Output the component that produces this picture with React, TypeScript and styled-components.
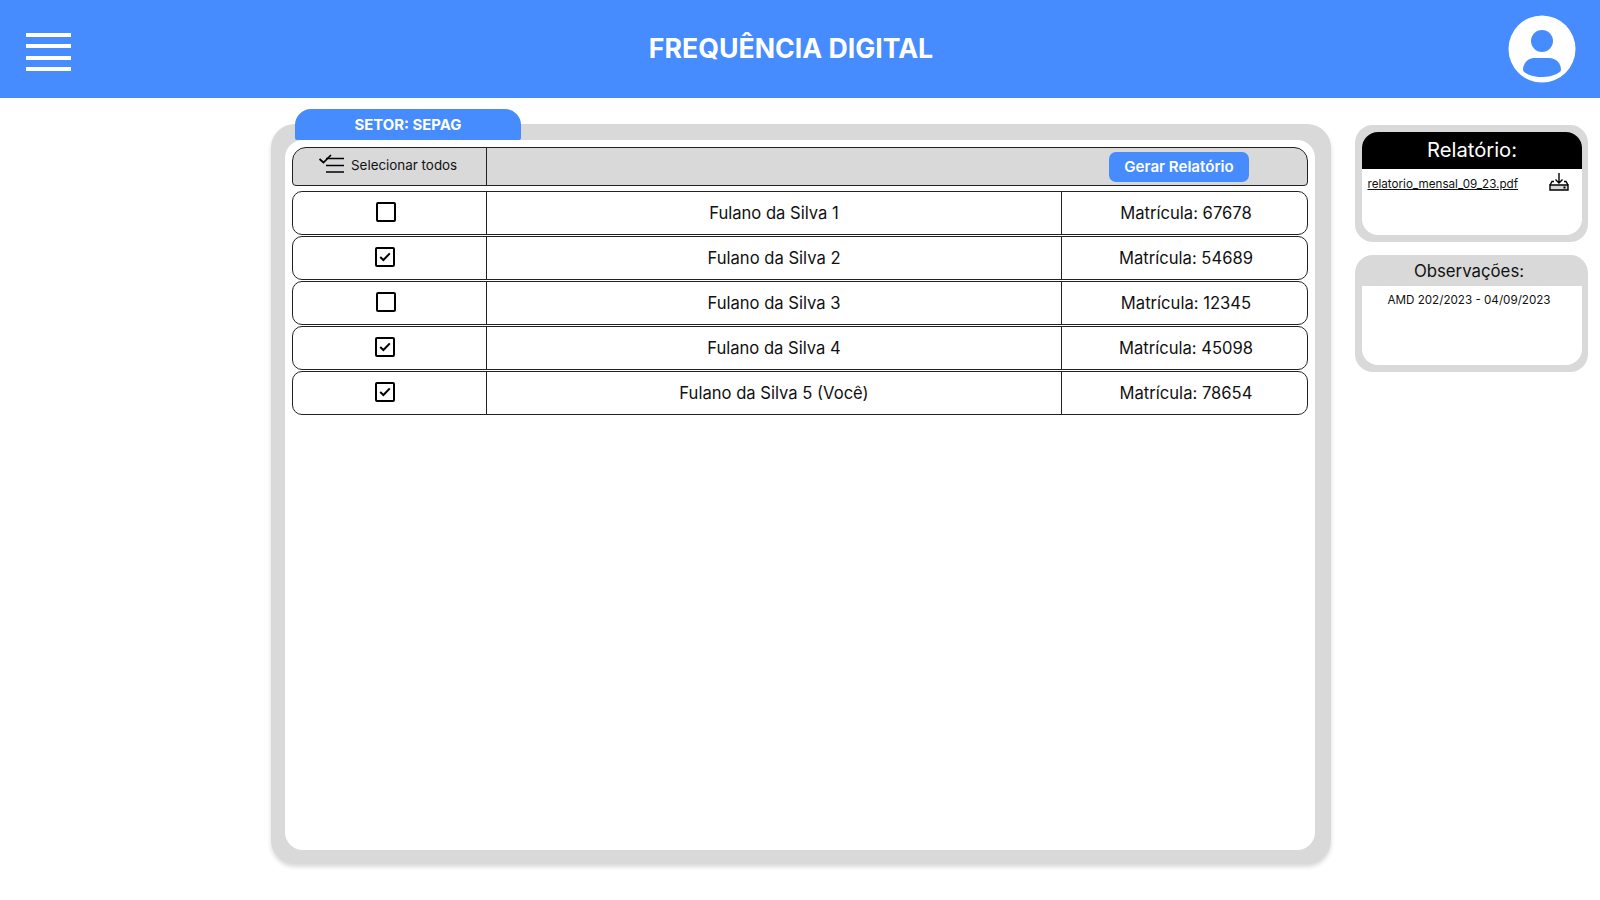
import React from "react";
import styled, { createGlobalStyle } from "styled-components";

const GlobalStyle = createGlobalStyle`
  * {
    box-sizing: border-box;
  }
  html, body {
    margin: 0;
    padding: 0;
    background: #fff;
    font-family: "Inter", "Liberation Sans", sans-serif;
    color: #000;
  }
`;

const people = [
  { name: "Fulano da Silva 1", id: "67678", checked: false },
  { name: "Fulano da Silva 2", id: "54689", checked: true },
  { name: "Fulano da Silva 3", id: "12345", checked: false },
  { name: "Fulano da Silva 4", id: "45098", checked: true },
  { name: "Fulano da Silva 5 (Você)", id: "78654", checked: true },
];

const App = () => {
  return (
    <StyledPage>
      <GlobalStyle />
      <StyledHeader>
        <StyledMenu>
          <span />
          <span />
          <span />
          <span />
        </StyledMenu>
        <StyledTitle>FREQUÊNCIA DIGITAL</StyledTitle>
        <svg width="68" height="68" viewBox="0 0 68 68">
          <circle cx="34" cy="34" r="33.5" fill="#fff" />
          <circle cx="34" cy="26" r="11" fill="#468cff" />
          <path
            d="M15 55c0-7 5-12 12-12h14c7 0 12 5 12 12 0 2-7 7-19 7s-19-5-19-7z"
            fill="#468cff"
          />
        </svg>
      </StyledHeader>
      <StyledMain>
        <StyledLeftColumn>
          <StyledTab>SETOR: SEPAG</StyledTab>
          <StyledPanel>
            <StyledInner>
              <StyledToolbar>
                <StyledSelectAll>
                  <svg width="26" height="20" viewBox="0 0 26 20" fill="none" stroke="#000">
                    <path d="M1.5 5l4 3.5L13 1" strokeWidth="1.7" />
                    <path d="M8 4.5h18M8 11.5h18M8 18h18" strokeWidth="1.5" />
                  </svg>
                  Selecionar todos
                </StyledSelectAll>
                <StyledToolbarRight>
                  <StyledReportButton>Gerar Relatório</StyledReportButton>
                </StyledToolbarRight>
              </StyledToolbar>
              <StyledRows>
                {people.map((p) => (
                  <StyledRow key={p.id}>
                    <StyledCheckCell>
                      <StyledCheckbox $checked={p.checked}>
                        {p.checked && (
                          <svg width="12" height="10" viewBox="0 0 12 10" fill="none">
                            <path d="M1.2 5l3.2 3L10.8 1.4" stroke="#000" strokeWidth="2" />
                          </svg>
                        )}
                      </StyledCheckbox>
                    </StyledCheckCell>
                    <StyledNameCell>{p.name}</StyledNameCell>
                    <StyledIdCell>Matrícula: {p.id}</StyledIdCell>
                  </StyledRow>
                ))}
              </StyledRows>
            </StyledInner>
          </StyledPanel>
        </StyledLeftColumn>
        <StyledSide>
          <StyledCard>
            <StyledCardInner>
              <StyledReportHead>Relatório:</StyledReportHead>
              <StyledFileRow>
                <StyledFileLink>relatorio_mensal_09_23.pdf</StyledFileLink>
                <svg width="20" height="18" viewBox="0 0 20 18" fill="none" stroke="#000">
                  <path d="M1 12h18v5H1z" fill="#d9d9d9" strokeWidth="1.4" />
                  <path d="M5 8.5H3L1 12M15 8.5h2l2 3.5" strokeWidth="1.4" />
                  <path d="M10 0v10M6.5 6.5L10 10l3.5-3.5" strokeWidth="1.4" />
                  <rect x="14.5" y="13.5" width="2" height="2" fill="#000" stroke="none" />
                </svg>
              </StyledFileRow>
            </StyledCardInner>
          </StyledCard>
          <StyledObsCard>
            <StyledObsHead>Observações:</StyledObsHead>
            <StyledObsBody>AMD 202/2023 - 04/09/2023</StyledObsBody>
          </StyledObsCard>
        </StyledSide>
      </StyledMain>
    </StyledPage>
  );
};

const StyledPage = styled.div`
  width: 1600px;
  height: 900px;
  overflow: hidden;
  background: #fff;
`;

const StyledHeader = styled.header`
  height: 98px;
  background: #468cff;
  display: flex;
  align-items: center;
  justify-content: space-between;
  padding: 0 24px 0 26px;
`;

const StyledMenu = styled.div`
  width: 45px;
  margin-top: 6px;
  display: flex;
  flex-direction: column;
  gap: 7.5px;

  span {
    display: block;
    height: 4px;
    background: #fff;
  }
`;

const StyledTitle = styled.h1`
  margin: 0 0 2px 3px;
  font-size: 26.7px;
  line-height: 32px;
  font-weight: 700;
  color: #fff;
`;

const StyledMain = styled.main`
  display: flex;
  padding: 11px 12px 0 271px;
  gap: 24px;
`;

const StyledLeftColumn = styled.div`
  width: 1060px;
  display: flex;
  flex-direction: column;
`;

const StyledTab = styled.div`
  width: 226px;
  height: 31px;
  margin-left: 24px;
  margin-bottom: -16px;
  position: relative;
  background: #468cff;
  border-radius: 16px 16px 2px 2px;
  color: #fff;
  font-size: 14.9px;
  font-weight: 700;
  display: flex;
  align-items: center;
  justify-content: center;
`;

const StyledPanel = styled.section`
  height: 740px;
  background: #d9d9d9;
  border-radius: 24px;
  padding: 16px 16px 14px 14px;
  box-shadow: 0 3px 4px rgba(0, 0, 0, 0.15);
`;

const StyledInner = styled.div`
  height: 100%;
  background: #fff;
  border-radius: 18px;
  padding: 7px 7px 0 7px;
`;

const StyledToolbar = styled.div`
  height: 39px;
  display: grid;
  grid-template-columns: 194px 1fr;
  background: #d9d9d9;
  border: 1px solid #222;
  border-radius: 14px 14px 4px 4px;
`;

const StyledSelectAll = styled.div`
  display: flex;
  align-items: center;
  justify-content: flex-start;
  gap: 7px;
  padding: 0 0 3px 25px;
  font-size: 13.4px;
  border-right: 1px solid #222;
  color: #111;

  svg {
    margin-bottom: 2px;
  }
`;

const StyledToolbarRight = styled.div`
  display: flex;
  align-items: center;
  justify-content: flex-end;
  padding-right: 58px;
`;

const StyledReportButton = styled.button`
  width: 140px;
  height: 30px;
  border: none;
  border-radius: 7px;
  background: #468cff;
  color: #fff;
  font-family: inherit;
  font-size: 15.1px;
  font-weight: 600;
`;

const StyledRows = styled.div`
  margin-top: 5px;
  display: flex;
  flex-direction: column;
  gap: 1px;
`;

const StyledRow = styled.div`
  height: 44px;
  display: grid;
  grid-template-columns: 194px 575px 1fr;
  border: 1px solid #222;
  border-radius: 10px;
  font-size: 16.6px;
  color: #111;
`;

const StyledCheckCell = styled.div`
  display: flex;
  align-items: center;
  justify-content: flex-start;
  padding: 0 0 3px 83px;
  border-right: 1px solid #222;
`;

const StyledCheckbox = styled.div<{ $checked: boolean }>`
  width: 20px;
  height: 20px;
  border: ${(p) => (p.$checked ? "2.5px" : "2px")} solid #000;
  border-radius: 2px;
  display: flex;
  align-items: center;
  justify-content: center;
  margin-left: ${(p) => (p.$checked ? "-1px" : "0")};
`;

const StyledNameCell = styled.div`
  display: flex;
  align-items: center;
  justify-content: center;
  padding-bottom: 1px;
  border-right: 1px solid #222;
`;

const StyledIdCell = styled.div`
  display: flex;
  align-items: center;
  justify-content: center;
  padding: 0 0 1px 3px;
`;

const StyledSide = styled.aside`
  width: 233px;
  margin-top: 16px;
  display: flex;
  flex-direction: column;
  gap: 13px;
`;

const StyledCard = styled.div`
  height: 117px;
  background: #d9d9d9;
  border-radius: 18px;
  padding: 7px 6px 7px 7px;
`;

const StyledCardInner = styled.div`
  height: 100%;
  background: #fff;
  border-radius: 16px;
  overflow: hidden;
`;

const StyledReportHead = styled.div`
  height: 37px;
  padding-bottom: 2px;
  background: #000;
  color: #fff;
  font-size: 20.2px;
  display: flex;
  align-items: center;
  justify-content: center;
`;

const StyledFileRow = styled.div`
  display: flex;
  align-items: flex-start;
  justify-content: space-between;
  padding: 4px 13px 0 5.5px;

  span {
    margin-top: 3px;
  }
`;

const StyledFileLink = styled.span`
  font-size: 11.65px;
  line-height: 16px;
  text-decoration: underline;
  color: #111;
`;

const StyledObsCard = styled.div`
  height: 117px;
  background: #d9d9d9;
  border-radius: 18px;
  padding: 0 6px 7px 7px;
  display: flex;
  flex-direction: column;
`;

const StyledObsHead = styled.div`
  height: 31px;
  padding: 1px 6px 0 0;
  font-size: 16.8px;
  display: flex;
  align-items: center;
  justify-content: center;
  color: #111;
`;

const StyledObsBody = styled.div`
  flex: 1;
  background: #fff;
  border-radius: 0 0 16px 16px;
  font-size: 11.65px;
  line-height: 14px;
  text-align: center;
  padding: 7px 6px 0 0;
  color: #111;
`;

export default App;
